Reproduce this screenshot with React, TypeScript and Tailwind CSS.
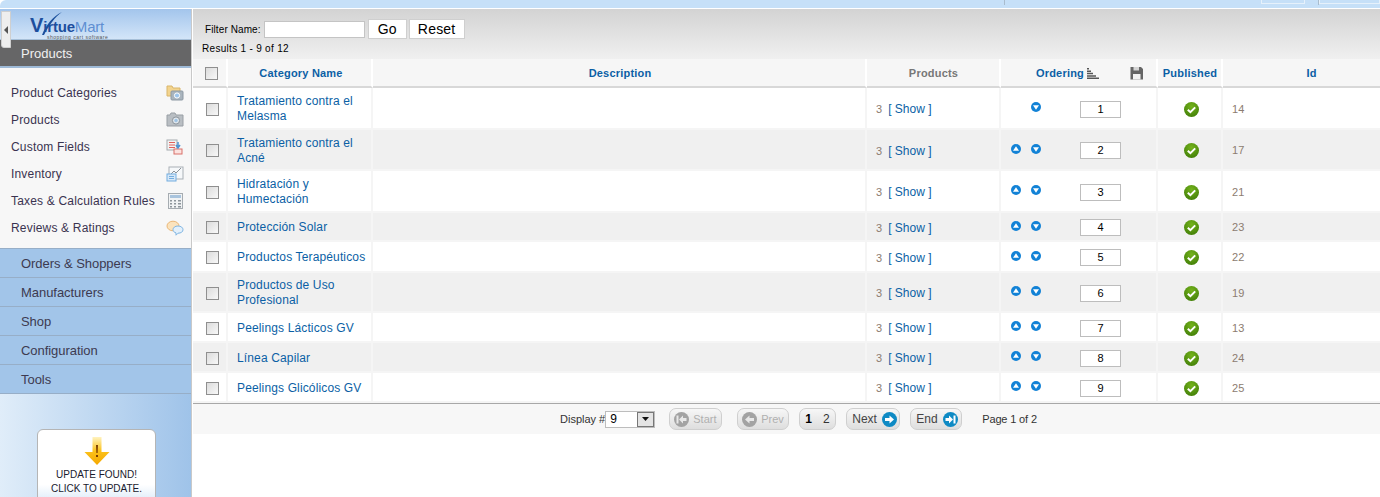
const font = "font-['Liberation_Sans',Arial,sans-serif]";

const rows = [
  { name: "Tratamiento contra el Melasma", order: 1, id: 14, h: "h-[42px]" },
  { name: "Tratamiento contra el Acné", order: 2, id: 17, h: "h-[41px]" },
  { name: "Hidratación y Humectación", order: 3, id: 21, h: "h-[42px]" },
  { name: "Protección Solar", order: 4, id: 23, h: "h-[29px]" },
  { name: "Productos Terapéuticos", order: 5, id: 22, h: "h-[31px]" },
  { name: "Productos de Uso Profesional", order: 6, id: 19, h: "h-[40px]" },
  { name: "Peelings Lácticos GV", order: 7, id: 13, h: "h-[30px]" },
  { name: "Línea Capilar", order: 8, id: 24, h: "h-[30px]" },
  { name: "Peelings Glicólicos GV", order: 9, id: 25, h: "h-[30px]" },
];

const subMenu = [
  { label: "Product Categories", icon: "folder" },
  { label: "Products", icon: "camera" },
  { label: "Custom Fields", icon: "fields" },
  { label: "Inventory", icon: "chart" },
  { label: "Taxes & Calculation Rules", icon: "calc" },
  { label: "Reviews & Ratings", icon: "chat" },
];

const accordion = ["Orders & Shoppers", "Manufacturers", "Shop", "Configuration", "Tools"];

const MenuIcon = ({ type }: { type: string }) => {
  if (type === "folder")
    return (
      <svg width="18" height="17" viewBox="0 0 18 17">
        <path d="M1 2h5l1 2h7v8H1z" fill="#f3d48e" stroke="#d9b56a" />
        <rect x="5" y="7" width="12" height="9" rx="1" fill="#a9b4bd" stroke="#8d99a3" />
        <circle cx="11" cy="11.5" r="2.6" fill="#9cc4ea" stroke="#fff" />
      </svg>
    );
  if (type === "camera")
    return (
      <svg width="18" height="15" viewBox="0 0 18 15">
        <path d="M1 3h3l1-2h4l1 2h7v11H1z" fill="#b9bec3" stroke="#999fa5" />
        <circle cx="10" cy="8.5" r="3.6" fill="#dfe6ec" stroke="#8c949b" />
        <circle cx="10" cy="8.5" r="1.7" fill="#9fc3e4" />
      </svg>
    );
  if (type === "fields")
    return (
      <svg width="18" height="16" viewBox="0 0 18 16">
        <rect x="1" y="1" width="10" height="10" fill="#f3f3f3" stroke="#a5abb0" />
        <path d="M3 3.500h6M3 6h6M3 8.500h6" stroke="#e0605a" />
        <rect x="8" y="10" width="8" height="5" fill="#fbe3e0" stroke="#d9706a" />
        <path d="M12 3v5M10 6l2 3 2-3" stroke="#4f93d2" strokeWidth="1.500" fill="none" />
      </svg>
    );
  if (type === "chart")
    return (
      <svg width="18" height="16" viewBox="0 0 18 16">
        <rect x="3" y="1" width="14" height="12" fill="#f6f8fa" stroke="#a9b0b6" />
        <path d="M4 9l4-4 2 2 5-5" stroke="#8b9299" fill="none" />
        <rect x="1" y="8" width="9" height="7" fill="#d7e8f8" stroke="#74aee0" />
        <path d="M3 10.500h5M3 12.500h5" stroke="#74aee0" />
      </svg>
    );
  if (type === "calc")
    return (
      <svg width="15" height="16" viewBox="0 0 15 16">
        <rect x="0.500" y="0.500" width="14" height="15" fill="#f1f3f4" stroke="#a6acb1" />
        <rect x="2" y="2" width="11" height="3" fill="#a9c4dd" />
        <path d="M2 7h2v1.500H2zM6 7h2v1.500H6zM10 7h3v1.500h-3zM2 10h2v1.500H2zM6 10h2v1.500H6zM10 10h3v1.500h-3zM2 13h2v1.500H2zM6 13h2v1.500H6zM10 13h3v1.500h-3z" fill="#8e969c" />
      </svg>
    );
  return (
    <svg width="18" height="16" viewBox="0 0 18 16">
      <ellipse cx="7" cy="6" rx="6" ry="4.800" fill="#fbe3bd" stroke="#eab778" />
      <path d="M12 6c3 0 5 1.600 5 3.700s-2 3.500-5 3.500l-2 2v-2.300c-2-.6-3-1.800-3-3.200C7 7.600 9 6 12 6z" fill="#e3f0fb" stroke="#7fb5e2" />
    </svg>
  );
};

const Arrow = ({ up = false }: { up?: boolean }) => (
  <svg width="10" height="10" viewBox="0 0 10 10" className="block">
    <circle cx="5" cy="5" r="5" fill="#1282d6" />
    <path d={up ? "M5 2.300 8 6.800H2z" : "M5 7.700 2 3.200h6z"} fill="#fff" />
  </svg>
);

const Check = () => (
  <svg width="15" height="15" viewBox="0 0 15 15" className="block">
    <defs>
      <radialGradient id="chk" cx="0.5" cy="0.3" r="0.8">
        <stop offset="0" stopColor="#74b31c" />
        <stop offset="1" stopColor="#3d7a06" />
      </radialGradient>
    </defs>
    <circle cx="7.500" cy="7.500" r="7.500" fill="url(#chk)" />
    <path d="M3.800 7.700l2.600 2.500 4.800-4.800" stroke="#fff" strokeWidth="2" fill="none" />
  </svg>
);

const Box = () => (
  <span className="block w-[13px] h-[13px] border border-[#8f8f8f] bg-gradient-to-br from-[#dcdcdc] to-[#f8f8f8]" />
);

const PagerIcon = ({ dir, bar = false, off = false }: { dir: "l" | "r"; bar?: boolean; off?: boolean }) => (
  <svg width="15" height="15" viewBox="0 0 15 15">
    <circle cx="7.500" cy="7.500" r="7.500" fill={off ? "#a3a3a3" : "#0e8ac4"} />
    {dir === "r" ? (
      <path d={bar ? "M2.500 6h3.500V3.500L10 7.500l-4 4V9H2.500zM10.500 3.500h2v8h-2z" : "M3 6h4.500V3.500l4.500 4-4.500 4V9H3z"} fill="#fff" />
    ) : (
      <path d={bar ? "M12.500 6H9V3.500l-4 4 4 4V9h3.500zM2.500 3.500h2v8h-2z" : "M12 6H7.500V3.500L3 7.500l4.500 4V9H12z"} fill={off ? "#e8e8e8" : "#fff"} />
    )}
  </svg>
);

const PagerBtn = ({ children, className }: { children: React.ReactNode; className: string }) => (
  <div className={`h-[22px] flex items-center rounded-[7px] border border-[#cfcfcf] bg-gradient-to-b from-[#f7f7f7] to-[#dedede] ${className}`}>
    {children}
  </div>
);

const Th = ({ children, className = "" }: { children?: React.ReactNode; className?: string }) => (
  <th className={`h-[29px] p-0 pt-[2px] bg-[#f6f6f6] border-b-2 border-[#d8d8d8] text-[11px] font-bold tracking-[0.2px] text-center align-middle ${className}`}>
    {children}
  </th>
);

export default function App() {
  return (
    <div className={`${font} w-[1380px] h-[497px] overflow-hidden bg-white flex flex-col text-[#333]`}>
      {/* top strip */}
      <div className="h-[9px] shrink-0 flex bg-[#c6e0f8] border-b border-white rounded-tl-[6px]">
        <div className="w-[1005px]" />
        <div className="w-px h-[5px] bg-[#a9bccd]" />
        <div className="w-[256px]" />
        <div className="w-[44px] h-[4px] border border-t-0 border-[#e6f1fb]" />
        <div className="w-[13px]" />
        <div className="w-px h-[5px] bg-[#a9bccd]" />
        <div className="w-[61px] h-[4px] border border-t-0 border-[#e6f1fb]" />
      </div>

      <div className="flex flex-1 min-h-0">
        {/* sidebar */}
        <aside className="relative w-[192px] shrink-0 overflow-hidden flex flex-col border-r border-[#c9c9c9] bg-gradient-to-r from-[#e0edf9] to-[#9fc3e9]">
          <div className="h-[31px] shrink-0 relative bg-gradient-to-b from-[#a3c5ec] to-[#d3e5f8] border-b border-[#a6bfd8]">
            <svg width="40" height="26" viewBox="0 0 40 26" className="absolute left-[26px] top-[1px]">
              <path d="M16 25C20 15 27 6 36 2 29 7 23 15 18 25z" fill="#1b4f9c" />
            </svg>
            <div className="absolute left-[30px] top-[8px] h-[16px] flex items-baseline font-bold leading-[16px] whitespace-nowrap">
              <span className="text-[20px] text-[#1d4f9e]">V</span>
              <span className="text-[15px] tracking-[-0.2px] text-[#1d4f9e]">irtue</span>
              <span className="text-[15px] tracking-[-0.2px] font-normal text-[#5f8fd2]">Mart</span>
            </div>
            <div className="absolute left-[47px] top-[26px] h-[4px] text-[5px] leading-[4px] text-[#555] tracking-[0.5px] whitespace-nowrap">shopping cart software</div>
          </div>
          <div className="h-[28px] shrink-0 pl-[21px] pt-[2px] flex items-center bg-[#666667] text-[13px] text-[#f0f0f0] border-b-2 border-[#9db9d6]">Products</div>
          <div className="h-[180px] shrink-0 pt-[11px] bg-[#f7f7f7] flex flex-col">
            {subMenu.map((m) => (
              <div key={m.label} className="h-[27px] shrink-0 pl-[11px] pr-[7px] flex items-center justify-between text-[12px] tracking-[0.18px] text-[#3a3350]">
                <span>{m.label}</span>
                <span className="w-[18px] flex justify-center"><MenuIcon type={m.icon} /></span>
              </div>
            ))}
          </div>
          {accordion.map((a) => (
            <div key={a} className="h-[29px] shrink-0 pl-[21px] pt-px flex items-center bg-[#a2c5e9] border-t border-[#97aec7] text-[13px] text-[#3d3a50] tracking-[-0.05px]">
              {a}
            </div>
          ))}
          <div className="shrink-0 border-t border-[#97aec7] pt-[35px] pl-[37px]">
            <div className="w-[119px] h-[80px] pt-[7px] flex flex-col items-center rounded-[6px] border border-[#b5b5b5] bg-gradient-to-b from-white from-70% to-[#cfe3f6] text-[10px] leading-[14px] text-[#1a1a2e] text-center">
              <svg width="26" height="28" viewBox="0 0 26 28" className="shrink-0">
                <defs>
                  <linearGradient id="upd" x1="0" y1="0" x2="0" y2="1">
                    <stop offset="0" stopColor="#fff3c0" />
                    <stop offset="0.5" stopColor="#fbc11a" />
                    <stop offset="1" stopColor="#f5a800" />
                  </linearGradient>
                </defs>
                <path d="M8.500 0h9v15h8L13 28 .5 15h8z" fill="url(#upd)" />
                <path d="M12 8h2l-.4 8h-1.200zM12 18h2v2h-2z" fill="#7a3c00" />
              </svg>
              <div className="mt-[3px]">UPDATE FOUND!</div>
              <div>CLICK TO UPDATE.</div>
            </div>
          </div>
          {/* collapse handle */}
          <div className="absolute left-[1px] top-[2px] w-[10px] h-[37px] flex items-center justify-center bg-[#eeeeee] border border-[#cfcfcf] rounded-bl-[3px]">
            <svg width="4" height="8" viewBox="0 0 4 8"><path d="M4 0v8L0 4z" fill="#555" /></svg>
          </div>
        </aside>

        {/* main */}
        <main className="flex-1 min-w-0 pl-px flex flex-col">
          <div className="h-[50px] shrink-0 bg-gradient-to-b from-[#d3d3d3] to-[#f0f0f0] pt-[10px] pl-[9px] text-black">
            <div className="flex items-center h-[20px] text-[10px] tracking-[0.1px]">
              <span className="pl-[3px]">Filter Name:</span>
              <span className="ml-[3px] w-[101px] h-[17px] bg-white border border-[#c4c4c4]" />
              <button className="ml-[3px] w-[39px] h-[20px] bg-white border border-[#cfcfcf] text-[14px] leading-none">Go</button>
              <button className="ml-[2px] w-[56px] h-[20px] bg-white border border-[#cfcfcf] text-[14px] leading-none tracking-[0.2px]">Reset</button>
            </div>
            <div className="mt-[3px] text-[10px] tracking-[0.3px] leading-[13px]">Results 1 - 9 of 12</div>
          </div>

          <table className="table-fixed border-separate border-spacing-0 w-[1187px]">
            <colgroup>
              <col className="w-[35px]" />
              <col className="w-[145px]" />
              <col className="w-[494px]" />
              <col className="w-[134px]" />
              <col className="w-[157px]" />
              <col className="w-[65px]" />
              <col className="w-[157px]" />
            </colgroup>
            <thead>
              <tr>
                <Th className="border-r-2 border-r-white"><span className="flex pl-[12px]"><Box /></span></Th>
                <Th className="border-r-2 border-r-white pl-[3px] text-[#0b5fa5]">Category Name</Th>
                <Th className="border-r-2 border-r-white pl-[2px] text-[#0b5fa5]">Description</Th>
                <Th className="border-r-2 border-r-white pl-[1px] text-[#777]">Products</Th>
                <Th className="border-r-2 border-r-white">
                  <div className="relative -mt-px flex items-center justify-center gap-[3px] pr-[22px] text-[#0b5fa5]">
                    Ordering
                    <svg width="12" height="11" viewBox="0 0 12 11">
                      <path d="M0 0h2v1.500H0zM0 2.400h4v1.500H0zM0 4.800h6v1.500H0zM0 7.200h9v1.500H0zM0 9.500h12V11H0z" fill="#555" />
                    </svg>
                    <svg width="15" height="15" viewBox="0 0 15 15" className="absolute right-[12px] top-[1px]">
                      <path d="M1.500 1h10.500l2 2v10.500H1.500z" fill="#666" />
                      <path d="M4 8h7.500v5.500H4z" fill="#f4f4f4" />
                      <path d="M4.500 1h5.500v3.500H4.500z" fill="#d4d4d4" />
                    </svg>
                  </div>
                </Th>
                <Th className="border-r-2 border-r-white pl-[1px] text-[#0b5fa5]">Published</Th>
                <Th className="pl-[20px] text-[#0b5fa5]">Id</Th>
              </tr>
            </thead>
            <tbody>
              {rows.map((r, i) => {
                const bg = i % 2 === 1 ? "bg-[#f0f0f0]" : "bg-white";
                const cell = `p-0 pt-[2px] align-middle border-r-2 border-r-[#f5f5f5] border-b-2 border-b-[#f5f5f5] ${bg}`;
                return (
                  <tr key={r.id} className={r.h}>
                    <td className={cell}><span className="flex pl-[13px]"><Box /></span></td>
                    <td className={`${cell} pl-[9px] text-[12px] leading-[15px] tracking-[0.14px] text-[#0b5fa5]`}>{r.name}</td>
                    <td className={cell} />
                    <td className={`${cell} pl-[9px] text-[11px] text-[#8c7c70] whitespace-nowrap`}>
                      3<span className="ml-[6px] text-[12px] text-[#0b5fa5]">[ Show ]</span>
                    </td>
                    <td className={cell}>
                      <div className="flex items-center pl-[10px]">
                        <span className="w-[20px] -mt-[4px]">{r.order > 1 && <Arrow up />}</span>
                        <span className="w-[49px] -mt-[4px]"><Arrow /></span>
                        <span className="w-[41px] h-[17px] flex items-center justify-center border border-[#bdbdbd] bg-white text-[11px] text-black">{r.order}</span>
                      </div>
                    </td>
                    <td className={cell}><span className="flex justify-center pl-[4px]"><Check /></span></td>
                    <td className={`p-0 pt-[2px] align-middle border-b-2 border-b-[#f5f5f5] ${bg} pl-[9px] text-[11px] tracking-[0.2px] text-[#8c7c70]`}>{r.id}</td>
                  </tr>
                );
              })}
            </tbody>
          </table>

          <div className="h-[31px] shrink-0 pl-[367px] flex items-center bg-[#f7f7f7] border-t border-[#a8a8a8] text-[11px] text-[#333]">
            <span>Display #</span>
            <div className="w-[50px] h-[17px] flex items-center justify-between border border-[#bdbdbd] bg-white pl-[4px] text-[12px] text-black">
              9
              <span className="w-[17px] h-[15px] flex items-center justify-center bg-[#e4e4e4] border border-[#777]">
                <svg width="7" height="4" viewBox="0 0 7 4"><path d="M0 0h7L3.500 4z" fill="#111" /></svg>
              </span>
            </div>
            <PagerBtn className="ml-[14px] w-[53px] pl-[4px] gap-[4px] text-[#b0b0b0]"><PagerIcon dir="l" bar off />Start</PagerBtn>
            <PagerBtn className="ml-[15px] w-[52px] pl-[4px] gap-[4px] text-[#b0b0b0]"><PagerIcon dir="l" off />Prev</PagerBtn>
            <PagerBtn className="ml-[10px] w-[37px] pl-[5px] gap-[11px] text-[12px] text-[#333]"><b className="text-black">1</b>2</PagerBtn>
            <PagerBtn className="ml-[10px] w-[54px] pl-[5px] gap-[5px] text-[12px] text-[#444]">Next<PagerIcon dir="r" /></PagerBtn>
            <PagerBtn className="ml-[10px] w-[52px] pl-[5px] gap-[5px] text-[12px] text-[#444]">End<PagerIcon dir="r" bar /></PagerBtn>
            <span className="ml-[20px] tracking-[-0.15px]">Page 1 of 2</span>
          </div>
        </main>
      </div>
    </div>
  );
}
